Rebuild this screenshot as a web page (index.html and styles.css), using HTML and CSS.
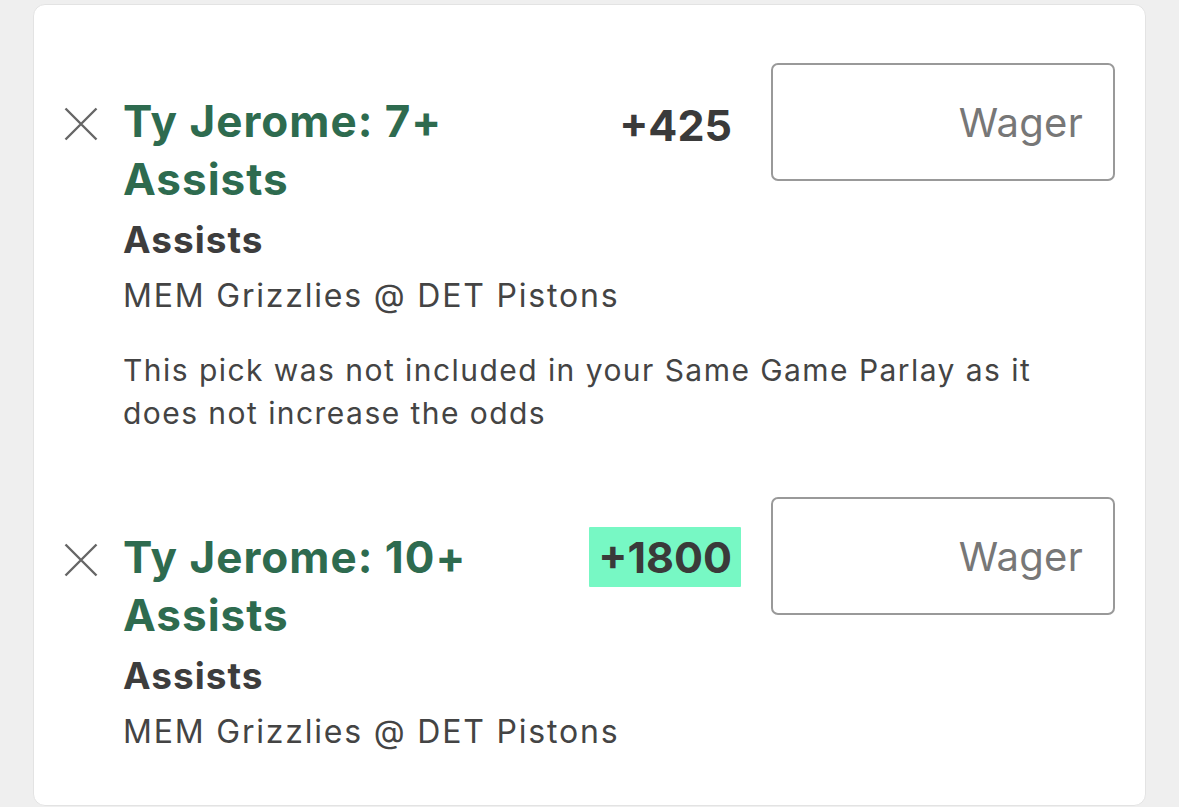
FILE: index.html
```html
<!DOCTYPE html>
<html lang="en">
<head>
<meta charset="utf-8">
<title>Bet slip</title>
<link rel="stylesheet" href="styles.css">
</head>
<body>
<div class="card">
  <div class="pick">
    <button class="remove" aria-label="Remove">
      <svg viewBox="0 0 34 34" width="34" height="34"><path d="M1.5 1.5 L32.5 32.5 M32.5 1.5 L1.5 32.5" stroke="#666" stroke-width="2.4" fill="none"/></svg>
    </button>
    <div class="title">Ty Jerome: 7+ Assists</div>
    <div class="odds odds-1"><span class="odds-val">+425</span></div>
    <input class="wager" type="text" placeholder="Wager">
    <div class="market">Assists</div>
    <div class="event">MEM Grizzlies @ DET Pistons</div>
    <div class="note">This pick was not included in your Same Game Parlay as it does not increase the odds</div>
  </div>
  <div class="pick pick-2">
    <button class="remove" aria-label="Remove">
      <svg viewBox="0 0 34 34" width="34" height="34"><path d="M1.5 1.5 L32.5 32.5 M32.5 1.5 L1.5 32.5" stroke="#666" stroke-width="2.4" fill="none"/></svg>
    </button>
    <div class="title">Ty Jerome: 10+ Assists</div>
    <div class="odds"><span class="odds-val boosted">+1800</span></div>
    <input class="wager" type="text" placeholder="Wager">
    <div class="market">Assists</div>
    <div class="event">MEM Grizzlies @ DET Pistons</div>
  </div>
</div>
</body>
</html>
```
FILE: styles.css
```css
html, body {
  background: #efefef;
}
body {
  margin: 4px 33px 0 33px;
  font-family: Inter, "Noto Sans", "Liberation Sans", sans-serif;
  color: #3d3d3d;
}
.card {
  background: #fff;
  border: 1px solid #e3e3e3;
  border-radius: 12px;
  padding: 58px 30px 48px 30px;
  height: 802px;
  box-sizing: border-box;
}
.pick {
  display: grid;
  grid-template-columns: 59px 466px 152px 1fr;
}
.pick-2 {
  margin-top: 62px;
}
.remove {
  grid-column: 1;
  grid-row: 1;
  align-self: start;
  margin-top: 44px;
  padding: 0;
  border: 0;
  background: none;
  width: 34px;
  height: 34px;
  display: block;
}
.remove svg { display: block; }
.pick-2 .remove { margin-top: 46px; }
.title {
  grid-column: 2;
  grid-row: 1;
  margin-top: 29px;
  font-size: 44px;
  line-height: 58px;
  font-weight: 700;
  color: #2e6b4f;
  letter-spacing: 1px;
}
.pick-2 .title { margin-top: 31px; }
.odds {
  grid-column: 3;
  grid-row: 1;
  align-self: start;
  justify-self: end;
  margin-top: 30px;
}
.odds-1 { margin-top: 32px; }
.odds-val {
  display: block;
  height: 60px;
  line-height: 60px;
  padding: 0 9px;
  font-size: 43px;
  font-weight: 700;
  color: #3a3a3a;
}
.odds-val.boosted {
  background: #77f8c4;
  border-radius: 1px;
}
.wager {
  grid-column: 4;
  grid-row: 1;
  align-self: start;
  justify-self: end;
  margin: 0;
  width: 344px;
  height: 118px;
  box-sizing: border-box;
  border: 2px solid #999;
  border-radius: 7px;
  padding: 0 30px 0 10px;
  text-align: right;
  font-family: Inter, "Noto Sans", "Liberation Sans", sans-serif;
  font-size: 40px;
  letter-spacing: 0.3px;
  color: #333;
  background: #fff;
  outline: none;
}
.wager::placeholder {
  color: #777;
}
.market {
  grid-column: 2 / -1;
  font-size: 37px;
  line-height: 63px;
  font-weight: 700;
  letter-spacing: 1px;
  color: #3d3d3d;
}
.event {
  grid-column: 2 / -1;
  font-size: 32px;
  line-height: 50px;
  letter-spacing: 1.8px;
  color: #444;
}
.note {
  grid-column: 2 / -1;
  margin-top: 28px;
  padding-right: 50px;
  font-size: 30px;
  line-height: 43px;
  letter-spacing: 1.45px;
  color: #444;
}
```
